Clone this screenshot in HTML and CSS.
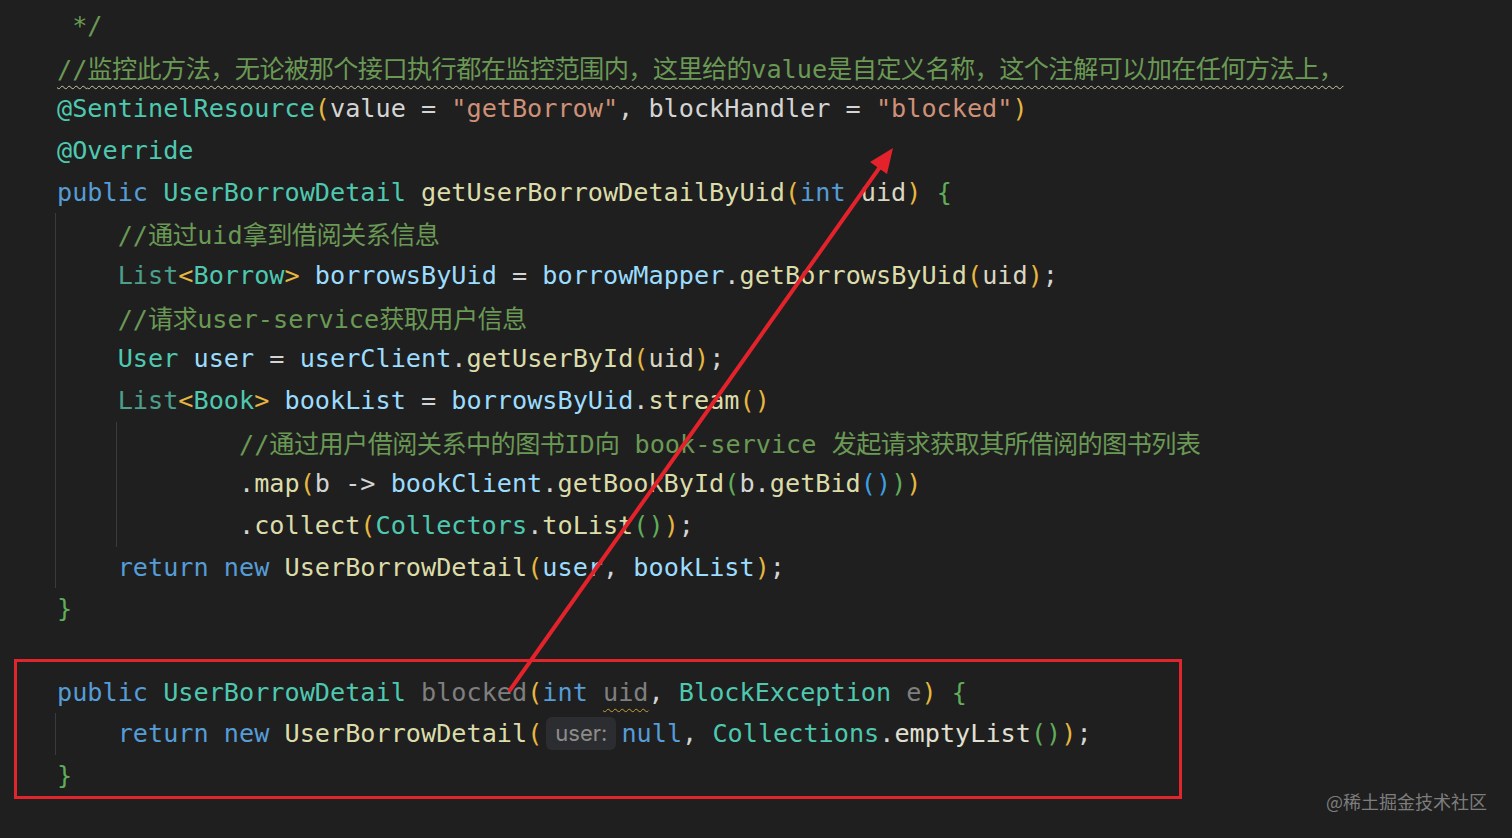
FILE: index.html
```html
<!DOCTYPE html>
<html lang="zh-CN">
<head>
  <meta charset="UTF-8">
  <meta name="viewport" content="width=device-width, initial-scale=1.0">
  <title>SentinelResource blockHandler</title>
  <link rel="stylesheet" href="styles.css">
</head>
<body>
  <main class="editor">
    <div class="line"><span class="cm"> */</span></div>
    <div class="line"><span class="cm typo">//<span class="cn">监控此方法，无论被那个接口执行都在监控范围内，这里给的</span>value<span class="cn">是自定义名称，这个注解可以加在任何方法上，</span></span></div>
    <div class="line"><span class="an">@SentinelResource</span><span class="p1">(</span><span class="pl">value = </span><span class="str">"getBorrow"</span><span class="pl">, blockHandler = </span><span class="str">"blocked"</span><span class="p1">)</span></div>
    <div class="line"><span class="an">@Override</span></div>
    <div class="line"><span class="kw">public</span> <span class="ty">UserBorrowDetail</span> <span class="fn">getUserBorrowDetailByUid</span><span class="p1">(</span><span class="kw">int</span> <span class="pa">uid</span><span class="p1">)</span> <span class="br">{</span></div>

    <div class="guide">
      <div class="line i1"><span class="cm">//<span class="cn">通过</span>uid<span class="cn">拿到借阅关系信息</span></span></div>
      <div class="line i1"><span class="itf">List</span><span class="p1">&lt;</span><span class="ty">Borrow</span><span class="p1">&gt;</span> <span class="var">borrowsByUid</span><span class="pl"> = </span><span class="var">borrowMapper</span><span class="pl">.</span><span class="fn">getBorrowsByUid</span><span class="p1">(</span><span class="pa">uid</span><span class="p1">)</span><span class="pl">;</span></div>
      <div class="line i1"><span class="cm">//<span class="cn">请求</span>user-service<span class="cn">获取用户信息</span></span></div>
      <div class="line i1"><span class="ty">User</span> <span class="var">user</span><span class="pl"> = </span><span class="var">userClient</span><span class="pl">.</span><span class="fn">getUserById</span><span class="p1">(</span><span class="pa">uid</span><span class="p1">)</span><span class="pl">;</span></div>
      <div class="line i1"><span class="itf">List</span><span class="p1">&lt;</span><span class="ty">Book</span><span class="p1">&gt;</span> <span class="var">bookList</span><span class="pl"> = </span><span class="var">borrowsByUid</span><span class="pl">.</span><span class="fn">stream</span><span class="p1">()</span></div>
      <div class="guide nested">
        <div class="line i2"><span class="cm">//<span class="cn">通过用户借阅关系中的图书</span>ID<span class="cn">向</span> book-service <span class="cn">发起请求获取其所借阅的图书列表</span></span></div>
        <div class="line i2"><span class="pl">.</span><span class="fn">map</span><span class="p1">(</span><span class="pl">b -&gt; </span><span class="var">bookClient</span><span class="pl">.</span><span class="fn">getBookById</span><span class="p2">(</span><span class="pl">b.</span><span class="fn">getBid</span><span class="p3">()</span><span class="p2">)</span><span class="p1">)</span></div>
        <div class="line i2"><span class="pl">.</span><span class="fn">collect</span><span class="p1">(</span><span class="ty">Collectors</span><span class="pl">.</span><span class="fn">toList</span><span class="p2">()</span><span class="p1">)</span><span class="pl">;</span></div>
      </div>
      <div class="line i1"><span class="kw">return</span> <span class="kw">new</span> <span class="fn">UserBorrowDetail</span><span class="p1">(</span><span class="var">user</span><span class="pl">, </span><span class="var">bookList</span><span class="p1">)</span><span class="pl">;</span></div>
    </div>
    <div class="line"><span class="br">}</span></div>
    <div class="line"></div>

    <section class="marked">
      <div class="line"><span class="kw">public</span> <span class="ty">UserBorrowDetail</span> <span class="un">blocked</span><span class="p1">(</span><span class="kw">int</span> <span class="un warn">uid</span><span class="pl">, </span><span class="ty">BlockException</span> <span class="un">e</span><span class="p1">)</span> <span class="br">{</span></div>
      <div class="guide">
        <div class="line i1"><span class="kw">return</span> <span class="kw">new</span> <span class="fn">UserBorrowDetail</span><span class="p1">(</span><span class="hint">user:</span><span class="kw">null</span><span class="pl">, </span><span class="ty">Collections</span><span class="pl">.</span><span class="em">emptyList</span><span class="p2">()</span><span class="p1">)</span><span class="pl">;</span></div>
      </div>
      <div class="line"><span class="br">}</span></div>
    </section>
  </main>

  <svg class="arrow" width="1512" height="838" viewBox="0 0 1512 838">
    <line x1="510" y1="690" x2="880" y2="167" stroke="#e3222b" stroke-width="4" stroke-linecap="round"/>
    <polygon points="893,148 887,174 870,162" fill="#e3222b"/>
  </svg>

  <div class="watermark">@稀土掘金技术社区</div>
</body>
</html>
```

FILE: styles.css
```css
html, body {
  margin: 0;
  background: #1f1f1f;
}

body {
  width: 1512px;
  height: 838px;
  overflow: hidden;
  position: relative;
}

.editor {
  padding: 5px 0 0 57px;
  font-family: "DejaVu Sans Mono", "Noto Sans CJK SC", monospace;
  font-size: 25.2px;
  color: #d4d4d4;
}

.line {
  height: 41.67px;
  line-height: 41.67px;
  white-space: pre;
}

.i1 { padding-left: 4ch; }
.i2 { padding-left: 8ch; }

/* indent guides */
.guide {
  border-left: 1px solid #3a3b3e;
  margin-left: -2px;
  padding-left: 1px;
}
.guide.nested {
  margin-left: calc(4ch - 2px);
}

/* red annotation box */
.marked {
  width: 1168px;
  box-sizing: border-box;
  margin: -13px 0 0 -43px;
  padding: 10px 0 0 40px;
  height: 140px;
  border: 3px solid #e0252d;
}

/* syntax colours */
.cm  { color: #6a9955; }
.cn  { font-family: "Noto Sans CJK SC", sans-serif; letter-spacing: -0.6px; }
.typo {
  text-decoration: underline wavy #c9c6a4;
  text-decoration-thickness: 1px;
  text-underline-offset: 7px;
}
.an  { color: #4ec9b0; }
.kw  { color: #569cd6; }
.ty  { color: #4ec9b0; }
.itf { color: #4b9f8b; }
.fn  { color: #dcdcaa; }
.em  { color: #e2e0d2; }
.var { color: #9cdcfe; }
.pa  { color: #dad6c4; }
.pl  { color: #d4d4d4; }
.str { color: #ce9178; }
.p1  { color: #e6b740; }
.p2  { color: #5fad5a; }
.p3  { color: #3e9ee0; }
.br  { color: #5fad5a; }
.un  { color: #7f7f7f; }
.warn {
  text-decoration: underline wavy #c9a23a;
  text-decoration-thickness: 1px;
  text-underline-offset: 7px;
}

.hint {
  display: inline-block;
  height: 33px;
  line-height: 33px;
  padding: 0 9px;
  margin: 0 5px 0 4px;
  border-radius: 6px;
  background: #2c2d30;
  color: #8c8c8c;
  font-family: Inter, "Noto Sans", sans-serif;
  font-size: 22px;
  vertical-align: 1px;
}

.arrow {
  position: absolute;
  left: 0;
  top: 0;
  pointer-events: none;
}

.watermark {
  position: absolute;
  right: 25px;
  bottom: 24px;
  font-family: "Noto Sans CJK SC", sans-serif;
  font-size: 18px;
  color: #7d7d7d;
}
```
